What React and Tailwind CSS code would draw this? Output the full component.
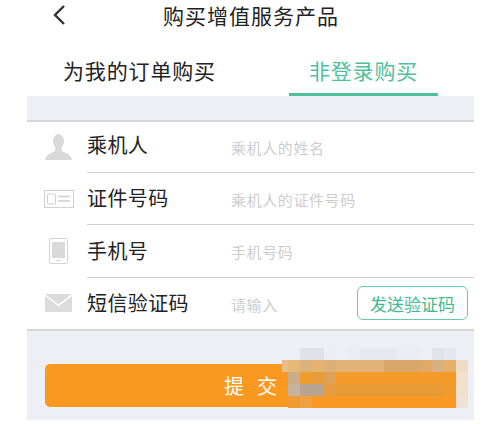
import React from 'react'

function UserIcon() {
  return (
    <svg width="27" height="26" viewBox="0 0 27 26" fill="#d9d9d9">
      <ellipse cx="13.5" cy="7.5" rx="5.5" ry="7.5" />
      <path d="M10.5 13 L16.5 13 L17 17 C20 19 26 20 27 26 L0 26 C1 20 7 19 10 17 Z" />
    </svg>
  )
}

function CardIcon() {
  return (
    <svg width="30" height="18" viewBox="0 0 30 18" fill="none" stroke="#cfcfcf">
      <rect x="0.5" y="0.5" width="29" height="17" />
      <rect x="3.5" y="4" width="8" height="10" rx="1" />
      <path d="M14 6.5 H26 M14 11 H26" strokeWidth="1.5" />
    </svg>
  )
}

function PhoneIcon() {
  return (
    <svg width="19" height="26" viewBox="0 0 19 26" fill="none">
      <rect x="0.5" y="0.5" width="18" height="25" rx="1.5" stroke="#d4d4d4" />
      <rect x="3" y="4" width="13" height="16" fill="#d9d9d9" />
      <rect x="7.5" y="22" width="4" height="1.2" fill="#cfcfcf" />
    </svg>
  )
}

function MailIcon() {
  return (
    <svg width="27" height="18" viewBox="0 0 27 18" fill="#dcdcdc">
      <path d="M0 0 H27 L13.5 10.5 Z" />
      <path d="M0 2 L13.5 12.5 L27 2 V18 H0 Z" />
    </svg>
  )
}

function Row({ icon, label, placeholder, h, labelClass = '', line = true, children }) {
  return (
    <div className={`flex ${h}`}>
      <div className="w-[60px] shrink-0 flex items-center justify-center pl-[3px]">{icon}</div>
      <div className={`flex-1 flex items-center ${line ? 'border-b border-[#cfcfcf]' : ''}`}>
        <span className={`w-[144px] shrink-0 text-[20px] text-[#222] tracking-[0.4px] ${labelClass}`}>{label}</span>
        <span className="flex-1 pt-[3px] text-[15px] tracking-[0.6px] text-[#cdcdcd]">{placeholder}</span>
        {children}
      </div>
    </div>
  )
}

// mosaic rows, first cell is 6px wide, the others 12px
const mosaic = [
  ['bg-transparent', 'bg-transparent', 'bg-[#e0e1e6]', 'bg-[#e0e1e6]', 'bg-[#edeef3]', 'bg-transparent', 'bg-[#ecedf2]', 'bg-[#e7e8ee]', 'bg-[#e7e8ee]', 'bg-[#e7e8ee]', 'bg-[#ecedf2]', 'bg-[#ecedf2]', 'bg-transparent', 'bg-[#e2e3e8]', 'bg-[#e6e7ec]', 'bg-transparent'],
  ['bg-[#e8bd85]', 'bg-[#e8b878]', 'bg-[#dcb27c]', 'bg-[#e6b271]', 'bg-[#dcb076]', 'bg-[#e2b278]', 'bg-[#e2b278]', 'bg-[#e2b278]', 'bg-[#e2b278]', 'bg-[#d9a868]', 'bg-[#d9a868]', 'bg-[#d9a868]', 'bg-[#e0aa66]', 'bg-[#d9b080]', 'bg-[#e6b06a]', 'bg-[#efdcc6]'],
  ['bg-transparent', 'bg-[#c9ad88]', 'bg-[#ef9c2f]', 'bg-[#e99d3a]', 'bg-[#dfa155]', 'bg-[#f49b2a]', 'bg-[#f49b2a]', 'bg-[#f49b2a]', 'bg-[#f49b2a]', 'bg-[#f49b2a]', 'bg-[#f49b2a]', 'bg-[#f49b2a]', 'bg-[#f49b2a]', 'bg-[#f49b2a]', 'bg-[#f49b2a]', 'bg-[#f1e0cc]'],
  ['bg-transparent', 'bg-[#c5b3a0]', 'bg-[#b8a48e]', 'bg-[#b8a48e]', 'bg-[#e79c42]', 'bg-[#e89a35]', 'bg-[#e89a35]', 'bg-[#e89a35]', 'bg-[#e89a35]', 'bg-[#e89a35]', 'bg-[#e89a35]', 'bg-[#e89a35]', 'bg-[#e89a35]', 'bg-[#e89a35]', 'bg-[#f19a2d]', 'bg-[#f1e0cc]'],
  ['bg-transparent', 'bg-[#f09c35]', 'bg-[#f1a041]', 'bg-[#fa9a25]', 'bg-[#fa9a25]', 'bg-[#fa9a25]', 'bg-[#fa9a25]', 'bg-[#fa9a25]', 'bg-[#fa9a25]', 'bg-[#fa9a25]', 'bg-[#fa9a25]', 'bg-[#fa9a25]', 'bg-[#fa9a25]', 'bg-[#fa9a25]', 'bg-[#fa9a25]', 'bg-[#efe2d4]'],
]

export default function App() {
  return (
    <div className="w-[491px] h-[424px] bg-white overflow-hidden relative font-['Noto_Sans_CJK_SC',sans-serif]">
      {/* Top bar */}
      <div className="h-[32px] flex items-center">
        <svg className="ml-[52px] mt-[-2px]" width="14" height="22" viewBox="0 0 14 22" fill="none" stroke="#333" strokeWidth="2.4">
          <path d="M12 2 L3 11 L12 20" />
        </svg>
        <span className="ml-[97px] text-[21px] tracking-[1px] text-[#222]">购买增值服务产品</span>
      </div>

      {/* Tabs */}
      <div className="flex ml-[27px] h-[64px] pt-[20px]">
        <div className="w-[262px] pl-[36px] text-[21px] tracking-[0.85px] text-[#222] leading-[36px]">为我的订单购买</div>
        <div className="w-[149px] h-[44px] text-center border-b-[3px] border-[#4fc09a] text-[21px] tracking-[0.85px] text-[#4fc09a] leading-[36px]">非登录购买</div>
      </div>

      {/* Form */}
      <div className="ml-[27px] w-[447px] bg-[#eeeff4] h-[324px] pt-[24px]">
        <div className="bg-white border-y-2 border-[#d6d6d6] h-[211px] flex flex-col">
          <Row icon={<UserIcon />} label="乘机人" labelClass="pb-[3px]" placeholder="乘机人的姓名" h="h-[51px]" />
          <Row icon={<CardIcon />} label="证件号码" placeholder="乘机人的证件号码" h="h-[53px]" />
          <Row icon={<PhoneIcon />} label="手机号" placeholder="手机号码" h="h-[53px]" />
          <Row icon={<MailIcon />} label="短信验证码" placeholder="请输入" h="h-[52px]" line={false}>
            <button className="w-[111px] h-[34px] mr-[6px] shrink-0 border border-[#66c9a9] rounded-[6px] text-[17px] text-[#3fb98f] bg-white">发送验证码</button>
          </Row>
        </div>
        <div className="mt-[33px] ml-[18px] w-[411px] h-[43px] bg-[#fb981f] rounded-l-[5px] flex items-center justify-center pl-[13px] text-white text-[20px] tracking-[13px]">提交</div>
      </div>

      {/* Mosaic over the corner */}
      <div className="absolute left-[282px] top-[348px] flex flex-col">
        {mosaic.map((row, i) => (
          <div key={i} className="flex h-[12px]">
            {row.map((c, j) => (
              <div key={j} className={`${j === 0 ? 'w-[6px]' : 'w-[12px]'} h-[12px] ${c}`} />
            ))}
          </div>
        ))}
      </div>
    </div>
  )
}
